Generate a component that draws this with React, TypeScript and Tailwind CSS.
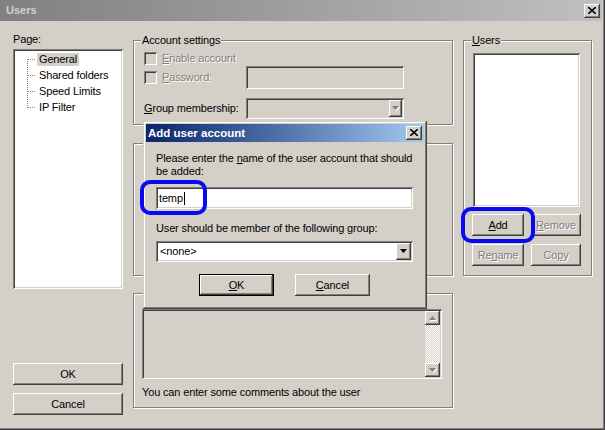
import React from "react";

const raised =
  "shadow-[inset_-1px_-1px_#404040,inset_1px_1px_#ffffff,inset_-2px_-2px_#808080,inset_2px_2px_#d4d0c8]";
const frame =
  "shadow-[inset_-1px_-1px_#404040,inset_1px_1px_#d4d0c8,inset_-2px_-2px_#808080,inset_2px_2px_#ffffff]";
const sunken =
  "shadow-[inset_1px_1px_#808080,inset_-1px_-1px_#ffffff,inset_2px_2px_#404040,inset_-2px_-2px_#d4d0c8]";
const etched = "border border-[#808080] shadow-[inset_1px_1px_#ffffff,1px_1px_#ffffff]";
const dim = "text-[#808080] [text-shadow:1px_1px_0_#ffffff]";

function CloseBox() {
  return (
    <div className={`flex h-[14px] w-[16px] shrink-0 items-center justify-center bg-[#d4d0c8] ${raised}`}>
      <svg width="8" height="7" viewBox="0 0 8 7" className="-mt-[1px]">
        <path d="M0 0L8 7M8 0L0 7" stroke="#000" strokeWidth="1.6" fill="none" />
      </svg>
    </div>
  );
}

function Arrow({ up, grey }: { up?: boolean; grey?: boolean }) {
  const pts = up ? "0,4 7,4 3.5,0" : "0,0 7,0 3.5,4";
  return (
    <svg width="8" height="5" viewBox="0 0 8 5">
      {grey && <polygon points={pts} fill="#ffffff" transform="translate(1 1)" />}
      <polygon points={pts} fill={grey ? "#808080" : "#000"} />
    </svg>
  );
}

function Checkbox() {
  return <span className={`block h-[13px] w-[13px] shrink-0 bg-[#d4d0c8] ${sunken}`} />;
}

function Legend({ children }: { children: React.ReactNode }) {
  return (
    <span className="-mt-[7px] ml-[7px] block w-fit bg-[#d4d0c8] px-[1px] leading-[13px]">
      {children}
    </span>
  );
}

function Btn({
  children,
  w,
  off,
  def,
}: {
  children: React.ReactNode;
  w: string;
  off?: boolean;
  def?: boolean;
}) {
  return (
    <div
      className={`flex h-[22px] items-center justify-center bg-[#d4d0c8] ${w} ${raised} ${
        def ? "border border-black" : ""
      } ${off ? dim : ""}`}
    >
      {children}
    </div>
  );
}

export default function App() {
  return (
    <div className="relative h-[430px] w-[605px] overflow-hidden bg-[#d4d0c8] font-['Liberation_Sans',Arial,sans-serif] text-[11px] leading-[13px] tracking-[-0.15px] text-black shadow-[inset_-1px_-1px_#404040,inset_-2px_-2px_#808080]">
      <div className="mr-[3px] flex h-[21px] items-center justify-between bg-linear-to-r from-[#808080] to-[#c0c0c0] pl-[6px] pr-[2px]">
        <span className="font-bold tracking-normal text-[#d4d0c8]">Users</span>
        <CloseBox />
      </div>

      <div className="flex items-start pl-[13px]">
        {/* left column */}
        <div className="mt-[12px] flex w-[110px] flex-col">
          <span>Page:</span>
          <div className={`mt-[3px] h-[240px] w-[110px] bg-white pl-[14px] pt-[2px] ${sunken}`}>
            <div className="flex">
              <svg width="10" height="64" className="shrink-0">
                <path
                  d="M0.5 8V57M0.5 8.5H9M0.5 24.5H9M0.5 40.5H9M0.5 56.5H9"
                  stroke="#808080"
                  strokeDasharray="1 1"
                  fill="none"
                  shapeRendering="crispEdges"
                />
              </svg>
              <div className="flex flex-col">
                <div className="flex h-[16px] items-center">
                  <span className="bg-[#d4d0c8] px-[2px]">General</span>
                </div>
                <div className="flex h-[16px] items-center px-[2px]">Shared folders</div>
                <div className="flex h-[16px] items-center px-[2px]">Speed Limits</div>
                <div className="flex h-[16px] items-center px-[2px]">IP Filter</div>
              </div>
            </div>
          </div>
          <div className="mt-[74px]">
            <Btn w="w-[110px]">OK</Btn>
          </div>
          <div className="mt-[8px]">
            <Btn w="w-[110px]">Cancel</Btn>
          </div>
        </div>

        {/* middle column */}
        <div className="ml-[10px] mt-[19px] flex w-[320px] flex-col">
          <div className={`h-[85px] ${etched}`}>
            <Legend>Account settings</Legend>
            <div className="pl-[10px]">
              <div className="mt-[5px] flex h-[13px] items-center gap-[5px]">
                <Checkbox />
                <span className={dim}>
                  <span className="underline">E</span>nable account
                </span>
              </div>
              <div className="mt-[1px] flex h-[23px] items-center">
                <div className="flex w-[102px] items-center gap-[5px]">
                  <Checkbox />
                  <span className={dim}>
                    <span className="underline">P</span>assword:
                  </span>
                </div>
                <div className={`h-[23px] w-[158px] bg-[#d4d0c8] ${sunken}`} />
              </div>
              <div className="mt-[9px] flex h-[21px] items-center">
                <span className="w-[102px]">
                  <span className="underline">G</span>roup membership:
                </span>
                <div className={`flex h-[21px] w-[158px] items-center justify-end bg-[#d4d0c8] p-[2px] ${sunken}`}>
                  <div className={`flex h-[17px] w-[13px] items-center justify-center ${raised}`}>
                    <Arrow grey />
                  </div>
                </div>
              </div>
            </div>
          </div>

          <div className={`mt-[18px] h-[133px] ${etched}`} />

          <div className={`mt-[17px] h-[115px] pl-[8px] ${etched}`}>
            <div className={`mt-[15px] flex h-[70px] w-[300px] justify-end bg-[#d4d0c8] p-[2px] ${sunken}`}>
              <div className="flex w-[15px] flex-col">
                <div className={`flex h-[14px] items-center justify-center ${raised}`}>
                  <Arrow up grey />
                </div>
                <div className="flex-1 bg-[image:repeating-conic-gradient(#d4d0c8_0%_25%,#ffffff_0%_50%)] bg-[length:2px_2px]" />
                <div className={`flex h-[14px] items-center justify-center ${raised}`}>
                  <Arrow grey />
                </div>
              </div>
            </div>
            <p className="mt-[7px]">You can enter some comments about the user</p>
          </div>
        </div>

        {/* right column */}
        <div className={`ml-[10px] mt-[19px] h-[236px] w-[129px] ${etched}`}>
          <Legend>
            <span className="underline">U</span>sers
          </Legend>
          <div className={`ml-[9px] mt-[6px] h-[154px] w-[107px] bg-white ${sunken}`} />
          <div className="mt-[7px] flex gap-[7px] pl-[8px]">
            <Btn w="w-[52px]">
              <span>
                <span className="underline">A</span>dd
              </span>
            </Btn>
            <Btn w="w-[50px]" off>
              <span>
                <span className="underline">R</span>emove
              </span>
            </Btn>
          </div>
          <div className="mt-[8px] flex gap-[7px] pl-[8px]">
            <Btn w="w-[52px]" off>
              <span>
                Re<span className="underline">n</span>ame
              </span>
            </Btn>
            <Btn w="w-[50px]" off>
              <span>
                Co<span className="underline">p</span>y
              </span>
            </Btn>
          </div>
        </div>
      </div>

      {/* Add user account dialog */}
      <div className={`absolute left-[143px] top-[121px] flex h-[188px] w-[284px] flex-col bg-[#d4d0c8] p-[3px] ${frame}`}>
        <div className="flex h-[18px] items-center justify-between bg-linear-to-r from-[#0a246a] to-[#a6caf0] pl-[2px] pr-[2px]">
          <span className="text-[11.5px] font-bold tracking-normal text-white">Add user account</span>
          <CloseBox />
        </div>
        <div className="flex flex-col pl-[10px] pr-[11px]">
          <p className="mt-[10px] whitespace-nowrap">
            Please enter the <span className="underline">n</span>ame of the user account that should
            <br />
            be added:
          </p>
          <div className={`mt-[9px] flex h-[22px] items-center bg-white pl-[3px] ${sunken}`}>
            <span>temp</span>
            <span className="ml-[1px] h-[13px] w-[1px] bg-black" />
          </div>
          <p className="mt-[13px]">
            User should be member of the following <span className="underline">g</span>roup:
          </p>
          <div className={`mt-[6px] flex h-[21px] items-center justify-between bg-white p-[2px] pl-[4px] ${sunken}`}>
            <span>&lt;none&gt;</span>
            <div className={`flex h-[17px] w-[15px] items-center justify-center bg-[#d4d0c8] ${raised}`}>
              <Arrow />
            </div>
          </div>
          <div className="mt-[12px] flex justify-center gap-[21px]">
            <Btn w="w-[75px]" def>
              <span>
                <span className="underline">O</span>K
              </span>
            </Btn>
            <Btn w="w-[75px]">
              <span>
                <span className="underline">C</span>ancel
              </span>
            </Btn>
          </div>
        </div>
      </div>

      {/* blue highlight marks */}
      <div className="absolute left-[140px] top-[180px] h-[35px] w-[67px] rounded-[10px] border-[4px] border-[#0a0af0]" />
      <div className="absolute left-[461px] top-[207px] h-[36px] w-[74px] rounded-[10px] border-[4px] border-[#0a0af0]" />
    </div>
  );
}
